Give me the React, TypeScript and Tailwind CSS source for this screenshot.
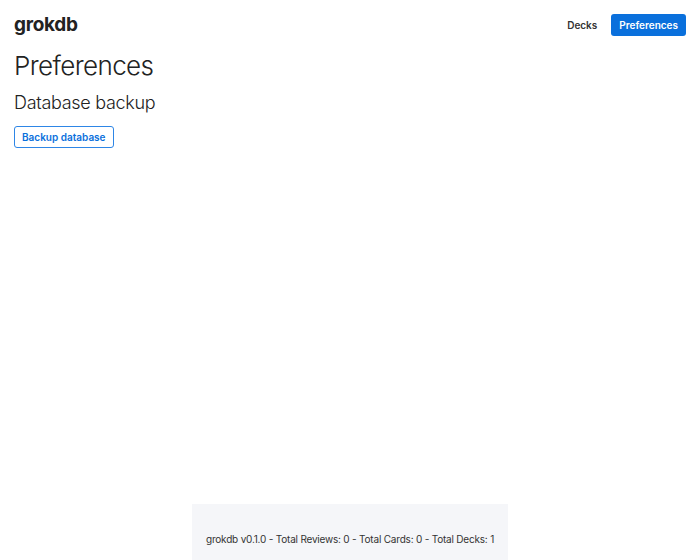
export default function App() {
  return (
    <div
      className="flex min-h-[560px] flex-col bg-white text-[#222]"
      style={{ fontFamily: "Inter, 'Noto Sans', sans-serif" }}
    >
      <header className="flex items-center justify-between px-[14px] pt-[14px]">
        <h1 className="text-[19px] font-bold leading-[22px] tracking-[-0.3px]">grokdb</h1>
        <nav className="flex items-center gap-[8px]">
          <a className="px-[6px] py-[5px] text-[10px] font-semibold leading-[12px] text-[#333]">Decks</a>
          <a className="rounded-[3px] bg-[#0a70dc] px-[8px] py-[5px] text-[10px] font-semibold leading-[12px] text-white">
            Preferences
          </a>
        </nav>
      </header>
      <main className="flex flex-col items-start px-[14px]">
        <h2 className="mt-[15px] text-[26px] font-light leading-[30px] tracking-[-0.6px]">Preferences</h2>
        <h3 className="mt-[11px] text-[18px] font-light leading-[22px] tracking-[-0.3px]">Database backup</h3>
        <button className="mt-[12px] rounded-[3px] border border-[#2e86e6] px-[7px] py-[4px] text-[10px] font-semibold leading-[12px] text-[#0a70dc]">
          Backup database
        </button>
      </main>
      <footer className="mx-auto mt-auto bg-[#f5f6f9] px-[14px] pb-[13px] pt-[27px] text-[10px] leading-[16px] tracking-[-0.2px] text-[#333]">
        grokdb v0.1.0 - Total Reviews: 0 - Total Cards: 0 - Total Decks: 1
      </footer>
    </div>
  );
}
